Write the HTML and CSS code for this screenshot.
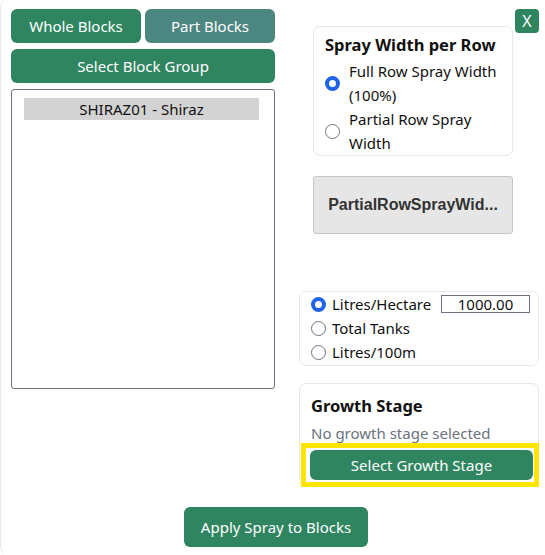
FILE: index.html
```html
<!DOCTYPE html>
<html>
<head>
<meta charset="utf-8">
<link rel="stylesheet" href="styles.css">
</head>
<body>
<div class="dialog">
  <button class="close">X</button>
  <div class="left">
    <div class="tabs">
      <button class="btn green">Whole Blocks</button>
      <button class="btn teal">Part Blocks</button>
    </div>
    <button class="btn green wide">Select Block Group</button>
    <div class="listbox">
      <div class="item">SHIRAZ01 - Shiraz</div>
    </div>
  </div>
  <div class="right">
    <div class="card spray">
      <div class="title">Spray Width per Row</div>
      <label class="opt"><span class="radio on"></span><span class="lbl">Full Row Spray Width (100%)</span></label>
      <label class="opt"><span class="radio"></span><span class="lbl">Partial Row Spray Width</span></label>
    </div>
    <button class="partial">PartialRowSprayWid...</button>
    <div class="card rate">
      <div class="row"><span class="radio on"></span><span>Litres/Hectare</span><span class="num">1000.00</span></div>
      <div class="row"><span class="radio"></span><span>Total Tanks</span></div>
      <div class="row"><span class="radio"></span><span>Litres/100m</span></div>
    </div>
    <div class="card growth">
      <div class="title">Growth Stage</div>
      <div class="muted">No growth stage selected</div>
      <div class="highlight"><button class="btn green gs">Select Growth Stage</button></div>
    </div>
  </div>
  <div class="footer">
    <button class="btn green apply">Apply Spray to Blocks</button>
  </div>
</div>
</body>
</html>
```
FILE: styles.css
```css
* { box-sizing: border-box; }
html, body { margin: 0; padding: 0; background: #fff; }
body {
  font-family: "Noto Sans", "Open Sans", sans-serif;
  font-size: 15px;
  color: #111;
  width: 545px;
  height: 555px;
  overflow: hidden;
}
.dialog {
  position: relative;
  width: 545px;
  height: 555px;
  border-left: 1px solid #e8e8ec;
  border-radius: 8px 0 0 8px;
  display: grid;
  grid-template-columns: 264px 240px;
  column-gap: 24px;
  padding: 9px 0 0 10px;
  grid-template-rows: 459px auto;
}
.close {
  position: absolute;
  top: 9px;
  right: 6px;
  width: 24px;
  height: 24px;
  border: none;
  border-radius: 4px;
  background: #2e855f;
  color: #fff;
  font-family: "Noto Sans", sans-serif;
  font-size: 16px;
  padding: 0;
  line-height: 24px;
}
.btn {
  border: none;
  border-radius: 6px;
  color: #fff;
  font-family: "Noto Sans", sans-serif;
  font-size: 15px;
  height: 34px;
  padding: 0;
  cursor: pointer;
}
.green { background: #2e855f; }
.teal { background: #4c8680; }
.tabs { display: flex; gap: 4px; }
.tabs .btn { width: 130px; }
.wide { width: 264px; margin-top: 6px; }
.listbox {
  margin-top: 6px;
  height: 300px;
  border: 1px solid #6b7280;
  border-radius: 3px;
  padding: 8px 15px 0 12px;
}
.item {
  background: #d3d3d3;
  height: 22px;
  line-height: 22px;
  text-align: center;
  color: #111;
}
.right { display: flex; flex-direction: column; }
.right > * { flex-shrink: 0; }
.card {
  border: 1px solid #e5e7eb;
  border-radius: 7px;
  background: #fff;
}
.spray {
  margin: 17px 0 0 14px;
  width: 200px;
  height: 130px;
  padding: 5px 8px 0 11px;
}
.spray .title { margin-bottom: 1px; }
.title { font-weight: bold; font-size: 16.5px; line-height: 26px; }
.opt { display: flex; align-items: center; gap: 9px; line-height: 24px; }
.opt .lbl { flex: 1; }
.radio {
  flex: none;
  width: 15px;
  height: 15px;
  border-radius: 50%;
  border: 1px solid #6b7280;
  background: #fff;
  display: inline-block;
}
.radio.on {
  border: 4.5px solid #1f63e8;
  background: #fff;
}
.partial {
  margin: 20px 0 0 14px;
  width: 200px;
  height: 58px;
  background: #e6e6e6;
  border: 1px solid #c6c6c6;
  border-radius: 3px;
  font-family: "Liberation Sans", Arial, sans-serif;
  font-weight: bold;
  font-size: 16px;
  color: #333;
  padding: 0;
}
.rate {
  margin-top: 57px;
  height: 75px;
  padding: 0 8px 0 11px;
}
.row { display: flex; align-items: center; gap: 6px; height: 24px; }
.num {
  margin-left: auto;
  width: 89px;
  height: 18px;
  border: 1px solid #6b7280;
  text-align: center;
  line-height: 16px;
}
.growth {
  margin-top: 17px;
  height: 104px;
  padding: 9px 0 0 0;
}
.growth .title, .growth .muted { padding-left: 11px; }
.muted { color: #6b7280; line-height: 20px; margin-top: 4px; }
.highlight {
  margin: 0 -1px 0 1px;
  border: 5px solid #ffe500;
  padding: 2px 2px 2px 4px;
}
.gs {
  display: block;
  width: 223px;
  height: 30px;
  border-radius: 6px;
}
.footer {
  grid-column: 1 / span 2;
  display: flex;
  justify-content: center;
}
.apply { width: 184px; height: 40px; margin-top: 39px; margin-left: 2px; }
```
